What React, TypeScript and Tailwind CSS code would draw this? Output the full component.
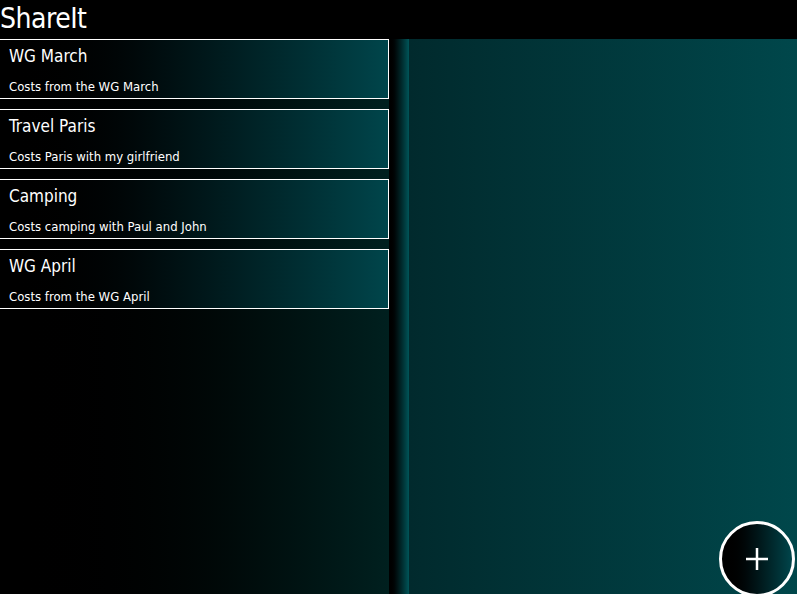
import React from 'react';

const groups = [
  { title: 'WG March', desc: 'Costs from the WG March' },
  { title: 'Travel Paris', desc: 'Costs Paris with my girlfriend' },
  { title: 'Camping', desc: 'Costs camping with Paul and John' },
  { title: 'WG April', desc: 'Costs from the WG April' },
];

export default function App() {
  return (
    <div
      className="flex h-[594px] w-[797px] flex-col overflow-hidden bg-black text-white"
      style={{ fontFamily: '"DejaVu Sans", sans-serif' }}
    >
      {/* Header */}
      <header className="flex h-[39px] shrink-0 items-center bg-black">
        <h1 className="mt-[-2px] text-[28px] leading-none tracking-[-0.5px] [font-stretch:condensed]">ShareIt</h1>
      </header>

      <div className="flex min-h-0 flex-1">
        {/* List of groups */}
        <div className="flex w-[389px] shrink-0 flex-col gap-[10px] bg-gradient-to-r from-black to-[#00201f]">
          {groups.map((g) => (
            <div
              key={g.title}
              className="flex h-[60px] flex-col border border-l-0 border-white bg-gradient-to-r from-black to-[#00454b] pl-[9px] pr-2 pt-[5px] [font-stretch:condensed]"
            >
              <span className="text-[17px] leading-[22px]">{g.title}</span>
              <span className="mt-[12px] text-[13px] leading-[16px]">{g.desc}</span>
            </div>
          ))}
        </div>

        {/* Divider */}
        <div className="w-[20px] shrink-0 bg-gradient-to-r from-black to-[#005559]" />

        {/* Detail panel */}
        <div className="relative flex-1 bg-gradient-to-r from-[#012a2d] to-[#00474b]">
          <button className="absolute bottom-[-3px] right-[2px] flex h-[76px] w-[76px] items-center justify-center rounded-full border-[3px] border-white bg-gradient-to-r from-black to-[#00454b]">
            <svg width="24" height="24" viewBox="0 0 24 24" fill="none" stroke="white" strokeWidth="2.5">
              <path d="M12 1v22M1 12h22" />
            </svg>
          </button>
        </div>
      </div>
    </div>
  );
}
